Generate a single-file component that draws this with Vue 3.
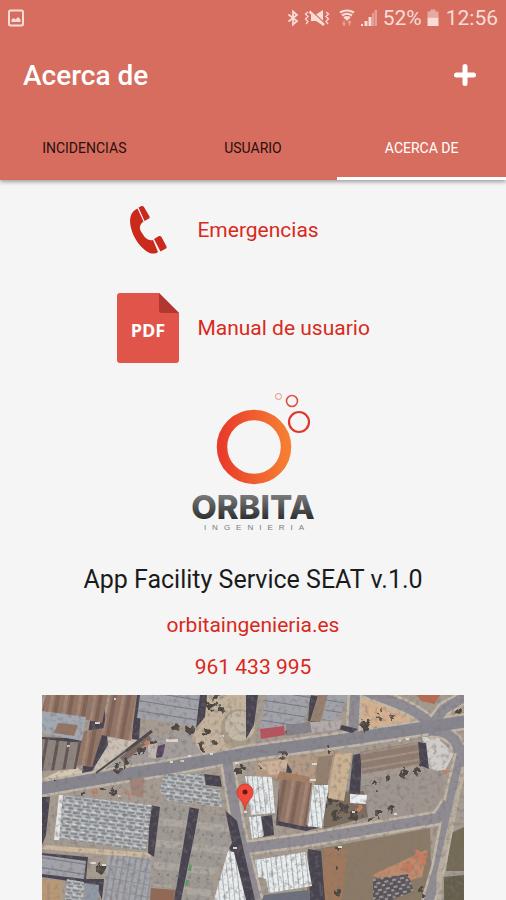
<script setup>
import { ref } from 'vue';

const tabs = ['INCIDENCIAS', 'USUARIO', 'ACERCA DE'];
const activeTab = ref('ACERCA DE');

// open ground between the buildings
const grounds = [
    { points: '0,0 422,0 422,205 0,205', fill: '#a59b91' },
    { points: '62,42 98,45 52,84 54,60', fill: '#cbc0b4' },
    { points: '98,42 178,36 180,64 56,82', fill: '#a29d9b' },
    { points: '163,0 213,0 211,55 160,58 150,45', fill: '#c3b29c' },
    { points: '318,3 330,2 386,23 316,35', fill: '#d5b08e' },
    { points: '0,84 30,70 52,82 0,96', fill: '#d7c7b2' },
    { points: '213,64 300,56 300,100 213,80', fill: '#b39a85' },
    { points: '380,42 394,42 412,58 402,78 384,72', fill: '#cfccca' },
    { points: '318,84 402,75 400,122 318,122', fill: '#9f9690' },
    { points: '280,98 322,96 326,122 282,134', fill: '#7b6c5d' },
    { points: '265,156 388,133 390,205 265,205', fill: '#8b7a66' },
    { points: '283,152 306,155 300,205 279,205', fill: '#a0785c' },
    { points: '330,180 386,154 380,182 350,190', fill: '#c08a6c' },
    { points: '409,138 422,132 422,176 404,176', fill: '#736b55' },
    { points: '402,182 422,180 422,205 402,205', fill: '#645f4c' },
    { points: '410,18 422,17 422,24 408,26', fill: '#ab8c5d' },
    { points: '3,150 110,158 108,164 0,154', fill: '#ccb99e' },
];

// shadows that the buildings throw on the ground
const shadows = [
    '92,0 100,0 97,45 90,44',
    '157,0 165,0 163,22 154,33',
    '48,26 62,8 66,50 50,76 40,78',
    '300,30 316,34 310,38 296,34',
    '268,0 281,2 276,30 266,26',
    '108,110 118,112 112,162 106,158',
    '146,112 157,114 142,205 132,205',
    '184,116 195,126 213,205 204,205 188,154 182,150',
    '196,146 201,152 182,205 172,205',
    '217,122 230,120 232,140 221,142',
    '266,154 279,156 283,205 268,205',
    '311,60 320,58 318,100 307,98',
    '376,47 384,48 387,74 377,70',
    '162,79 178,81 180,92 164,90',
    '0,42 46,44 46,48 0,46',
    '0,158 46,162 44,184 62,184 60,205 54,190 0,182',
    '237,92 266,132 284,131 264,136 234,130',
    '0,102 8,102 4,140 0,150',
    '204,0 216,0 212,30 204,44',
    '240,60 250,76 244,98 238,78',
    '116,52 123,50 120,62 113,63',
];

const roofs = [
    { points: '4,0 66,0 60,28 0,16', fill: 'url(#brown)' },
    { points: '0,16 44,22 40,46 0,38', fill: '#a3a9b2' },
    { points: '16,28 36,30 32,41 12,38', fill: '#947562' },
    { points: '68,0 95,0 89,46 60,40', fill: 'url(#brown)' },
    { points: '0,44 40,48 34,74 0,76', fill: 'url(#taupe)' },
    { points: '42,36 62,33 50,72 35,70', fill: 'url(#brown)' },
    { points: '98,0 158,0 154,31 95,23', fill: 'url(#slate)' },
    { points: '106,50 115,48 114,64 106,62', fill: '#c4b6b0' },
    { points: '124,44 136,44 136,47 124,47', fill: '#ddd2ca' },
    { points: '224,0 269,0 261,30 218,34', fill: 'url(#slate)' },
    { points: '218,34 242,31 243,40 219,44', fill: '#b9525f' },
    { points: '244,30 268,27 270,37 245,41', fill: '#85838b' },
    { points: '268,27 300,25 298,34 270,38', fill: '#b3aaaa' },
    { points: '276,0 286,0 278,27 268,26', fill: '#96806f' },
    { points: '286,0 306,0 296,26 280,25', fill: 'url(#slate)' },
    { points: '375,0 398,0 392,9 379,6', fill: '#b96b50' },
    { points: '88,84 102,83 101,103 90,100', fill: '#a18477' },
    { points: '122,79 162,79 163,92 178,94 180,112 124,105 118,96', fill: 'url(#sawtooth)' },
    { points: '214,68 246,64 244,78 228,80', fill: '#ceb298' },
    { points: '238,76 268,82 266,91 234,86', fill: '#a57f63' },
    { points: '293,59 310,58 302,106 286,103', fill: '#cbb293' },
    { points: '276,62 291,60 284,98 272,95', fill: '#94806e' },
    { points: '318,57 376,47 378,69 320,79', fill: 'url(#planks)' },
    { points: '203,81 230,82 233,118 209,120', fill: 'url(#white)' },
    { points: '207,122 219,121 222,141 210,144', fill: 'url(#white)' },
    { points: '237,84 270,88 264,132 236,126', fill: 'url(#brown)' },
    { points: '271,90 287,90 280,133 266,131', fill: 'url(#white)' },
    { points: '308,99 325,100 324,109 308,108', fill: '#eceff3' },
    { points: '19,100 110,110 104,156 14,143', fill: 'url(#sawtooth)' },
    { points: '17,100 21,100 17,145 12,145', fill: '#e4e4e1' },
    { points: '120,108 148,110 134,194 110,190 114,150', fill: 'url(#concrete)' },
    { points: '157,118 184,119 190,148 172,180 168,205 139,205', fill: 'url(#concrete)' },
    { points: '0,160 44,166 42,184 0,179', fill: 'url(#slate)' },
    { points: '66,160 110,163 107,205 60,205', fill: 'url(#metal)' },
    { points: '0,184 21,186 19,205 0,205', fill: '#b99975' },
    { points: '25,184 42,187 41,205 23,205', fill: 'url(#sawtooth)' },
    { points: '43,188 57,190 56,205 42,205', fill: '#8f99a5' },
    { points: '109,193 133,195 132,205 108,205', fill: '#936955' },
    { points: '186,156 192,157 204,205 172,205', fill: 'url(#white)' },
    { points: '213,165 264,157 270,191 227,198 224,184 216,182', fill: 'url(#white)' },
    { points: '222,200 266,195 268,205 220,205', fill: '#6b6f7d' },
    { points: '331,184 366,179 372,196 350,205 331,205', fill: 'url(#ruin)' },
];

const wideRoads = [
    'M184 56 L188 84 L196 132 L214 205',
    'M313 0 L311 40',
    'M324 -4 C345 6 370 10 390 30',
    'M426 0 L402 14 L390 30',
    'M422 50 L410 100 L397 170 L386 208',
    'M386 36 C402 34 416 42 417 58',
    'M196 154 L264 145 L396 123 L406 108',
];
const mainRoad = 'M-4 94 L60 83 L130 72 L207 58 L307 44 L426 26';

// trees and bushes
const trees = [
    [112, 49, 3], [100, 55, 3], [93, 59, 2], [83, 68, 3], [76, 73, 3], [134, 32, 3], [148, 35, 4], [163, 37, 3],
    [158, 50, 4], [172, 48, 3], [175, 2, 3], [168, 11, 4], [179, 15, 3], [197, 74, 4],
    [324, 29, 5], [337, 24, 2], [350, 21, 2], [340, 14, 2], [332, 88, 4], [347, 83, 3], [361, 78, 4], [374, 76, 3],
    [290, 107, 4], [302, 114, 5], [292, 122, 5], [313, 120, 5], [336, 119, 3], [348, 114, 3], [328, 124, 3], [296, 154, 3],
    [296, 172, 2], [294, 196, 3], [243, 61, 3], [288, 55, 3], [219, 72, 4], [378, 195, 4], [58, 175, 5], [248, 38, 2],
    [12, 85, 2], [72, 98, 3], [60, 94, 2], [40, 99, 2], [150, 159, 2], [415, 16, 3],
];
// cars, vans and crates
const lights = [
    [138, 65, 4], [146, 60, 3], [128, 66, 3], [178, 40, 4], [168, 58, 3], [193, 67, 4], [356, 45, 3], [364, 43, 3],
    [384, 44, 4], [394, 43, 4], [352, 118, 3], [296, 151, 4], [202, 116, 3], [191, 152, 4], [48, 167, 6], [60, 169, 4],
    [270, 68, 5], [268, 84, 6], [25, 50, 3], [53, 27, 5], [310, 116, 3], [72, 3, 2], [76, 100, 3], [346, 17, 2],
];
// bare red earth
const rust = [
    [104, 48, 3], [269, 31, 3], [241, 108, 3], [52, 96, 2], [86, 98, 2], [365, 172, 5], [378, 162, 6], [318, 113, 5], [404, 75, 2],
];
</script>

<template>
    <div class="app">
        <header class="app-bar">
            <div class="status-bar">
                <svg class="status-icon picture-icon" viewBox="0 0 16 18" aria-hidden="true">
                    <rect x="1" y="1.5" width="14" height="15" rx="1.5" fill="none" stroke="currentColor" stroke-width="2" />
                    <path d="M3.500 13 V10.500 L6 9 L7.500 10.500 L10 8 L12.500 10.500 V13 Z" fill="currentColor" />
                </svg>
                <div class="status-group">
                    <svg class="status-icon bluetooth-icon" viewBox="0 0 12 18" aria-hidden="true">
                        <path d="M1.500 5.500 L10 12 L6 15.500 V2.500 L10 6 L1.500 12.500" fill="none" stroke="currentColor" stroke-width="1.800" />
                    </svg>
                    <svg class="status-icon mute-icon" viewBox="0 0 26 18" aria-hidden="true">
                        <path d="M7 5.500 H12 L19 1 V16.500 L12 12 H7 Z" fill="currentColor" />
                        <path d="M6.500 1 L22 15.500" stroke="#d66d5f" stroke-width="1.500" />
                        <path d="M5.500 2.500 L20 16" stroke="currentColor" stroke-width="2.400" />
                        <path d="M4 3 L1.500 5 L4 7.500 L1.500 10 L4 12.500 L2 15 M22 3 L24.500 5 L22 7.500 L24.500 10 L22 12.500 L24 15" fill="none" stroke="currentColor" stroke-width="1.300" />
                    </svg>
                    <svg class="status-icon wifi-icon" viewBox="0 0 16 18" aria-hidden="true">
                        <path d="M1 3.500 Q8 -0.500 15 3.500 M3 6.500 Q8 3 13 6.500 M5 9 Q8 7 11 9" fill="none" stroke="currentColor" stroke-width="2.200" />
                        <path d="M8 12 L5.500 9 H10.500 Z" fill="currentColor" />
                        <path d="M5 11.500 V16 M3.500 14 L5 16.500 L6.500 14 M10.500 17 V12 M9 14 L10.500 12 L12 14" fill="none" stroke="#e3a08f" stroke-width="1.400" />
                    </svg>
                    <svg class="status-icon signal-icon" viewBox="0 0 18 18" aria-hidden="true">
                        <path d="M1 15 h2 v2 h-2 z M4.500 12 h3 v5 h-3 z M8.500 8 h3 v9 h-3 z" fill="currentColor" />
                        <path d="M12 4 h2 v13 h-2 z M14.500 1 h2.500 v16 h-2.500 z" fill="#e3a095" />
                    </svg>
                    <span class="percent">52%</span>
                    <svg class="status-icon battery-icon" viewBox="0 0 12 18" aria-hidden="true">
                        <path d="M3.500 0.500 h5 v2 h3 v6 h-11 v-6 h3 z" fill="#e6aaa0" />
                        <path d="M0.500 8.500 h11 v8.500 h-11 z" fill="currentColor" />
                    </svg>
                    <span class="clock">12:56</span>
                </div>
            </div>

            <div class="toolbar">
                <h1 class="title">Acerca de</h1>
                <button class="add-button" type="button" aria-label="Añadir">
                    <svg viewBox="0 0 22 22" aria-hidden="true">
                        <path d="M11 2.500 V19.500 M2.500 11 H19.500" stroke="#fff" stroke-width="5" stroke-linecap="round" />
                    </svg>
                </button>
            </div>

            <nav class="tabs">
                <button v-for="tab in tabs" :key="tab" type="button" class="tab"
                    :class="{ 'is-active': tab === activeTab }" @click="activeTab = tab">
                    {{ tab }}
                </button>
            </nav>
        </header>

        <main class="content">
            <div class="actions">
                <a class="action" href="#emergencias">
                    <svg class="phone-icon" viewBox="0 0 38 50" aria-hidden="true">
                        <g fill="#c92a1c">
                            <path d="M8.500 3.500 L14.500 16.500 C10 20 10 24 13 28 C16 33 19 36 24 35 L29 47 C26 49.500 21 49 17 46 C9 40 4 31 2 23 C0 14 1 7 8.500 3.500 Z" />
                            <path d="M9.500 2.500 L12.500 1 Q14 0.500 15 2 L20.500 11.500 Q21 13 20 13.500 L15.500 16 Z" />
                            <path d="M25 34 L30 31 Q31.500 30.500 32.500 32 L37.500 41.500 Q38 43 37 43.500 L31.500 46.500 Z" />
                        </g>
                    </svg>
                    <span>Emergencias</span>
                </a>
                <a class="action" href="#manual">
                    <svg class="pdf-icon" viewBox="0 0 62 70" aria-hidden="true">
                        <path d="M3 0 H42 L62 20 V67 Q62 70 59 70 H3 Q0 70 0 67 V3 Q0 0 3 0 Z" fill="#e0544a" />
                        <path d="M42 0 L62 20 H45 Q42 20 42 17 Z" fill="#b23730" />
                        <text class="pdf-text" x="31" y="44">PDF</text>
                    </svg>
                    <span>Manual de usuario</span>
                </a>
            </div>

            <svg class="logo" viewBox="0 0 130 144" role="img" aria-label="Orbita Ingenieria">
                <defs>
                    <linearGradient id="ring" x1="0" y1="0" x2="1" y2="0">
                        <stop offset="0" stop-color="#e93c2b" />
                        <stop offset="1" stop-color="#f57e33" />
                    </linearGradient>
                    <linearGradient id="letters" x1="0" y1="0" x2="0" y2="1">
                        <stop offset="0.2" stop-color="#77797a" />
                        <stop offset="0.8" stop-color="#2d2f30" />
                    </linearGradient>
                </defs>
                <circle cx="66" cy="57" r="32" fill="none" stroke="url(#ring)" stroke-width="10.500" />
                <circle cx="111" cy="32" r="10" fill="none" stroke="#dc3a2e" stroke-width="2.200" />
                <circle cx="104" cy="11" r="5.500" fill="none" stroke="#dd5144" stroke-width="1.600" />
                <circle cx="90.500" cy="6.500" r="3" fill="none" stroke="#e39388" stroke-width="1" />
                <text class="logo-name" x="65" y="129" fill="url(#letters)">ORBITA</text>
                <text class="logo-sub" x="69" y="140">INGENIERIA</text>
            </svg>

            <p class="version">App Facility Service SEAT v.1.0</p>
            <a class="link" href="#web">orbitaingenieria.es</a>
            <a class="link" href="tel:961433995">961 433 995</a>

            <svg class="map" viewBox="0 0 422 205" role="img" aria-label="Mapa">
                <defs>
                    <pattern id="brown" width="14" height="30" patternUnits="userSpaceOnUse" patternTransform="rotate(10)">
                        <rect width="14" height="30" fill="#957565" />
                        <rect width="4" height="30" fill="#7f6256" />
                        <rect x="9" width="3" height="30" fill="#a58775" />
                    </pattern>
                    <pattern id="taupe" width="11" height="30" patternUnits="userSpaceOnUse" patternTransform="rotate(10)">
                        <rect width="11" height="30" fill="#8f857e" />
                        <rect width="3" height="30" fill="#5f5452" />
                    </pattern>
                    <pattern id="slate" width="40" height="10" patternUnits="userSpaceOnUse" patternTransform="rotate(9)">
                        <rect width="40" height="10" fill="#a2a3aa" />
                        <rect width="40" height="1" fill="#777982" />
                    </pattern>
                    <pattern id="metal" width="6" height="12" patternUnits="userSpaceOnUse" patternTransform="rotate(10)">
                        <rect width="6" height="12" fill="#a6a7ac" />
                        <rect width="2" height="12" fill="#91939a" />
                        <rect width="6" height="1" fill="#8f9196" />
                    </pattern>
                    <pattern id="concrete" width="40" height="22" patternUnits="userSpaceOnUse" patternTransform="rotate(6)">
                        <rect width="40" height="22" fill="#a09a94" />
                        <rect width="40" height="7" fill="#aea79f" />
                        <path d="M5 12 h2 M14 12 h2 M23 12 h2 M32 12 h2" stroke="#625e5e" />
                    </pattern>
                    <pattern id="planks" width="40" height="8" patternUnits="userSpaceOnUse" patternTransform="rotate(-10)">
                        <rect width="40" height="8" fill="#907d71" />
                        <rect width="40" height="2" fill="#a39082" />
                    </pattern>
                    <pattern id="white" width="5" height="14" patternUnits="userSpaceOnUse" patternTransform="rotate(-6)">
                        <rect width="5" height="14" fill="#e9eded" />
                        <rect width="1" height="14" fill="#adb3b8" />
                        <rect y="5" width="3" height="1" fill="#c7ccd0" />
                    </pattern>
                    <pattern id="sawtooth" width="9" height="7" patternUnits="userSpaceOnUse" patternTransform="rotate(7)">
                        <rect width="9" height="7" fill="#b4b8ba" />
                        <path d="M0 1 H7 M4 4 H9" stroke="#787b7f" stroke-width="1.300" />
                        <path d="M1 5.500 h4" stroke="#d8dbdc" />
                    </pattern>
                    <pattern id="ruin" width="8" height="7" patternUnits="userSpaceOnUse" patternTransform="rotate(-12)">
                        <rect width="8" height="7" fill="#59545a" />
                        <path d="M0 2 h4 M5 5 h3" stroke="#b9b2af" stroke-width="1.500" />
                    </pattern>
                    <filter id="grain" x="0" y="0" width="100%" height="100%">
                        <feTurbulence type="fractalNoise" baseFrequency="0.220" numOctaves="3" seed="4" />
                        <feColorMatrix values="0 0 0 0 0.200  0 0 0 0 0.170  0 0 0 0 0.170  1.500 0 0 0 -0.720" />
                    </filter>
                    <filter id="ragged">
                        <feTurbulence type="fractalNoise" baseFrequency="0.150" numOctaves="2" seed="9" />
                        <feDisplacementMap in="SourceGraphic" scale="14" xChannelSelector="R" yChannelSelector="G" />
                    </filter>
                </defs>

                <polygon v-for="(area, i) in grounds" :key="'g' + i" :points="area.points" :fill="area.fill" />
                <ellipse cx="197" cy="34" rx="18" ry="20" fill="#a89b88" />
                <ellipse cx="198" cy="31" rx="15" ry="15" fill="#c4b8a6" />

                <g fill="none" stroke-linejoin="round">
                    <path v-for="(d, i) in wideRoads" :key="'k' + i" :d="d" stroke="#c3b8a7" stroke-width="15" />
                    <path :d="mainRoad" stroke="#c0b6a9" stroke-width="17" />
                    <path v-for="(d, i) in wideRoads" :key="'r' + i" :d="d" stroke="#8f8c93" stroke-width="10" />
                    <path :d="mainRoad" stroke="#87868e" stroke-width="12" />
                    <path d="M422 72 L397 180 V205" stroke="#b8ae9f" stroke-width="5" />
                    <path d="M96 47 L54 78" stroke="#4f464a" stroke-width="2" />
                    <path d="M108 42 L80 65" stroke="#7c6961" stroke-width="6" />
                    <path d="M110 36 L84 56" stroke="#4f484c" stroke-width="3" />
                </g>

                <polygon v-for="(points, i) in shadows" :key="'s' + i" :points="points" fill="#47434f" />
                <g filter="url(#ragged)">
                    <circle v-for="([x, y, r], i) in trees" :key="'t' + i" :cx="x" :cy="y" :r="r" fill="#4b463f" />
                    <circle v-for="([x, y, r], i) in rust" :key="'o' + i" :cx="x" :cy="y" :r="r" fill="#c47d5e" />
                </g>
                <polygon v-for="(roof, i) in roofs" :key="'b' + i" :points="roof.points" :fill="roof.fill" />
                <path d="M116 51 L123 49 L121 60 L115 61 Z" fill="#5a4464" />
                <path d="M147 170 l3 0 l-1 6 l-3 0 z M144 185 l3 0 l-1 6 l-3 0 z" fill="#5e9b68" />
                <rect v-for="([x, y, w], i) in lights" :key="'l' + i" :x="x" :y="y" :width="w" height="2" fill="#ddd8d1" />
                <rect width="422" height="205" filter="url(#grain)" />

                <path d="M203 115 C202 105 195 105 195 97 A8 8 0 0 1 211 97 C211 105 204 105 203 115 Z" fill="#ee4b3d" stroke="#c8382c" stroke-width="0.800" />
                <circle cx="203" cy="97" r="2.500" fill="#6d1712" />
            </svg>
        </main>
    </div>
</template>

<style>
body {
    background-color: #f5f5f5;
}
</style>

<style scoped>
.app {
    font-family: Roboto, "Noto Sans", sans-serif;
    background-color: #f5f5f5;
    color: #1b1b1b;
}

.app-bar {
    position: relative;
    background-color: #d66d5f;
    box-shadow: 0 2px 4px rgba(0, 0, 0, 0.35);
}

.status-bar {
    display: flex;
    align-items: center;
    justify-content: space-between;
    height: 36px;
    padding: 0 8px;
    color: #f8dcd6;
    font-size: 21px;
}

.status-group {
    display: flex;
    align-items: center;
    gap: 5px;
}

.status-icon {
    display: block;
    height: 18px;
}

.picture-icon {
    width: 16px;
}

.bluetooth-icon {
    width: 12px;
}

.mute-icon {
    width: 26px;
}

.wifi-icon {
    width: 16px;
    margin-left: 4px;
}

.signal-icon {
    width: 18px;
}

.battery-icon {
    width: 12px;
}

.clock {
    margin-left: 2px;
}

.toolbar {
    display: flex;
    align-items: center;
    justify-content: space-between;
    height: 78px;
    padding: 0 30px 0 23px;
}

.title {
    margin: 0;
    color: #fff;
    font-size: 28px;
    font-weight: 500;
}

.add-button {
    width: 22px;
    height: 22px;
    padding: 0;
    border: none;
    background: none;
    cursor: pointer;
}

.add-button svg {
    display: block;
}

.tabs {
    display: grid;
    grid-template-columns: repeat(3, 1fr);
    height: 66px;
}

.tab {
    padding: 4px 0 0;
    border: none;
    border-bottom: 3px solid transparent;
    background: none;
    color: #2a0f0c;
    font-family: inherit;
    font-size: 14px;
    cursor: pointer;
}

.tab.is-active {
    border-bottom-color: #fff;
    color: #fff;
}

.content {
    display: flex;
    flex-direction: column;
    align-items: center;
}

.actions {
    display: flex;
    flex-direction: column;
    gap: 28px;
    box-sizing: border-box;
    width: 100%;
    padding: 15px 0 0 23.2%;
}

.action {
    display: grid;
    grid-template-columns: 62px auto;
    justify-content: start;
    align-items: center;
    gap: 18px;
    height: 70px;
    color: #d9291c;
    font-size: 21px;
    line-height: 26px;
    text-decoration: none;
}

.phone-icon {
    justify-self: center;
    width: 38px;
    height: 50px;
}

.pdf-icon {
    width: 62px;
    height: 70px;
}

.pdf-text {
    fill: #fff;
    font-family: "Open Sans", sans-serif;
    font-size: 18px;
    font-weight: 700;
    text-anchor: middle;
}

.logo {
    width: 130px;
    height: 144px;
    margin-top: 27px;
}

.logo-name {
    font-family: Inter, "Liberation Sans", sans-serif;
    font-size: 33px;
    font-weight: 800;
    text-anchor: middle;
}

.logo-sub {
    fill: #77797b;
    font-family: "Liberation Sans", Arial, sans-serif;
    font-size: 8px;
    letter-spacing: 6px;
    text-anchor: middle;
}

.version {
    margin: 29px 0 14px;
    font-size: 25px;
    line-height: 34px;
}

.link {
    margin-bottom: 14px;
    color: #d9291c;
    font-size: 21px;
    line-height: 28px;
    text-decoration: none;
}

.map {
    display: block;
    width: 83.4%;
}
</style>
